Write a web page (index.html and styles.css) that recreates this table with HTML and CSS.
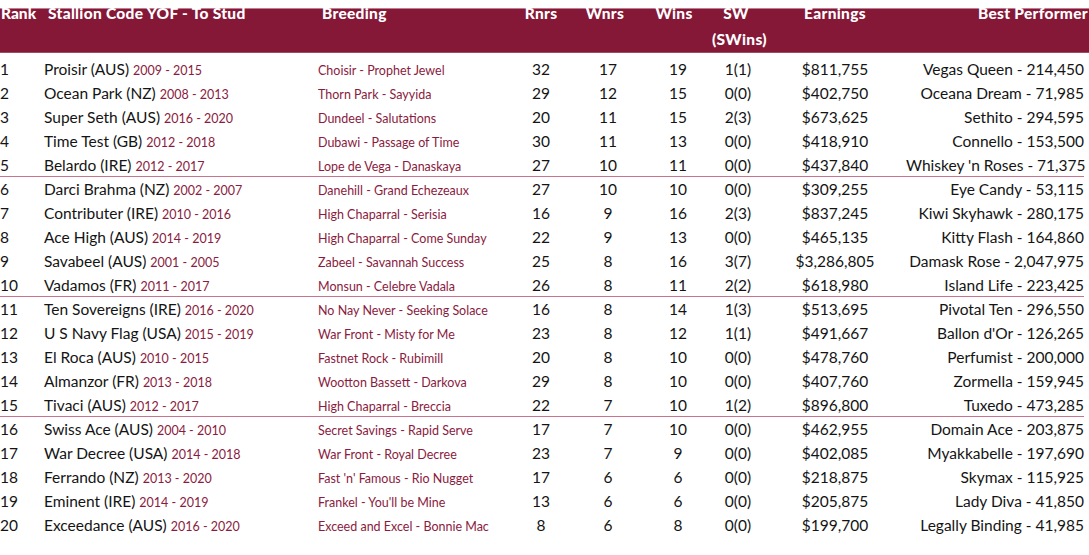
FILE: index.html
```html
<!DOCTYPE html>
<html lang="en">
<head>
<meta charset="utf-8">
<title>Stallion Rankings</title>
<link rel="stylesheet" href="styles.css">
</head>
<body>
<div class="page">
  <div class="head">
    <div class="head-inner grid">
      <div class="c-rank">Rank</div>
      <div class="c-stallion h-stallion">Stallion Code YOF - To Stud</div>
      <div class="c-breed h-breed">Breeding</div>
      <div class="c-num">Rnrs</div>
      <div class="c-num h-wnrs">Wnrs</div>
      <div class="c-num h-wins">Wins</div>
      <div class="c-num h-sw">SW<br>(SWins)</div>
      <div class="c-num">Earnings</div>
      <div class="c-best h-best">Best Performer</div>
    </div>
  </div>
  <div class="body">
    <div class="row grid"><div class="c-rank">1</div><div class="c-stallion">Proisir (AUS) <span class="yr">2009 - 2015</span></div><div class="c-breed">Choisir - Prophet Jewel</div><div class="c-num">32</div><div class="c-num">17</div><div class="c-num">19</div><div class="c-num">1(1)</div><div class="c-num">$811,755</div><div class="c-best">Vegas Queen - 214,450</div></div>
    <div class="row grid"><div class="c-rank">2</div><div class="c-stallion">Ocean Park (NZ) <span class="yr">2008 - 2013</span></div><div class="c-breed">Thorn Park - Sayyida</div><div class="c-num">29</div><div class="c-num">12</div><div class="c-num">15</div><div class="c-num">0(0)</div><div class="c-num">$402,750</div><div class="c-best">Oceana Dream - 71,985</div></div>
    <div class="row grid"><div class="c-rank">3</div><div class="c-stallion">Super Seth (AUS) <span class="yr">2016 - 2020</span></div><div class="c-breed">Dundeel - Salutations</div><div class="c-num">20</div><div class="c-num">11</div><div class="c-num">15</div><div class="c-num">2(3)</div><div class="c-num">$673,625</div><div class="c-best">Sethito - 294,595</div></div>
    <div class="row grid"><div class="c-rank">4</div><div class="c-stallion">Time Test (GB) <span class="yr">2012 - 2018</span></div><div class="c-breed">Dubawi - Passage of Time</div><div class="c-num">30</div><div class="c-num">11</div><div class="c-num">13</div><div class="c-num">0(0)</div><div class="c-num">$418,910</div><div class="c-best">Connello - 153,500</div></div>
    <div class="row grid sep"><div class="c-rank">5</div><div class="c-stallion">Belardo (IRE) <span class="yr">2012 - 2017</span></div><div class="c-breed">Lope de Vega - Danaskaya</div><div class="c-num">27</div><div class="c-num">10</div><div class="c-num">11</div><div class="c-num">0(0)</div><div class="c-num">$437,840</div><div class="c-best">Whiskey 'n Roses - 71,375</div></div>
    <div class="row grid"><div class="c-rank">6</div><div class="c-stallion">Darci Brahma (NZ) <span class="yr">2002 - 2007</span></div><div class="c-breed">Danehill - Grand Echezeaux</div><div class="c-num">27</div><div class="c-num">10</div><div class="c-num">10</div><div class="c-num">0(0)</div><div class="c-num">$309,255</div><div class="c-best">Eye Candy - 53,115</div></div>
    <div class="row grid"><div class="c-rank">7</div><div class="c-stallion">Contributer (IRE) <span class="yr">2010 - 2016</span></div><div class="c-breed">High Chaparral - Serisia</div><div class="c-num">16</div><div class="c-num">9</div><div class="c-num">16</div><div class="c-num">2(3)</div><div class="c-num">$837,245</div><div class="c-best">Kiwi Skyhawk - 280,175</div></div>
    <div class="row grid"><div class="c-rank">8</div><div class="c-stallion">Ace High (AUS) <span class="yr">2014 - 2019</span></div><div class="c-breed">High Chaparral - Come Sunday</div><div class="c-num">22</div><div class="c-num">9</div><div class="c-num">13</div><div class="c-num">0(0)</div><div class="c-num">$465,135</div><div class="c-best">Kitty Flash - 164,860</div></div>
    <div class="row grid"><div class="c-rank">9</div><div class="c-stallion">Savabeel (AUS) <span class="yr">2001 - 2005</span></div><div class="c-breed">Zabeel - Savannah Success</div><div class="c-num">25</div><div class="c-num">8</div><div class="c-num">16</div><div class="c-num">3(7)</div><div class="c-num">$3,286,805</div><div class="c-best">Damask Rose - 2,047,975</div></div>
    <div class="row grid sep"><div class="c-rank">10</div><div class="c-stallion">Vadamos (FR) <span class="yr">2011 - 2017</span></div><div class="c-breed">Monsun - Celebre Vadala</div><div class="c-num">26</div><div class="c-num">8</div><div class="c-num">11</div><div class="c-num">2(2)</div><div class="c-num">$618,980</div><div class="c-best">Island Life - 223,425</div></div>
    <div class="row grid"><div class="c-rank">11</div><div class="c-stallion">Ten Sovereigns (IRE) <span class="yr">2016 - 2020</span></div><div class="c-breed">No Nay Never - Seeking Solace</div><div class="c-num">16</div><div class="c-num">8</div><div class="c-num">14</div><div class="c-num">1(3)</div><div class="c-num">$513,695</div><div class="c-best">Pivotal Ten - 296,550</div></div>
    <div class="row grid"><div class="c-rank">12</div><div class="c-stallion">U S Navy Flag (USA) <span class="yr">2015 - 2019</span></div><div class="c-breed">War Front - Misty for Me</div><div class="c-num">23</div><div class="c-num">8</div><div class="c-num">12</div><div class="c-num">1(1)</div><div class="c-num">$491,667</div><div class="c-best">Ballon d'Or - 126,265</div></div>
    <div class="row grid"><div class="c-rank">13</div><div class="c-stallion">El Roca (AUS) <span class="yr">2010 - 2015</span></div><div class="c-breed">Fastnet Rock - Rubimill</div><div class="c-num">20</div><div class="c-num">8</div><div class="c-num">10</div><div class="c-num">0(0)</div><div class="c-num">$478,760</div><div class="c-best">Perfumist - 200,000</div></div>
    <div class="row grid"><div class="c-rank">14</div><div class="c-stallion">Almanzor (FR) <span class="yr">2013 - 2018</span></div><div class="c-breed">Wootton Bassett - Darkova</div><div class="c-num">29</div><div class="c-num">8</div><div class="c-num">10</div><div class="c-num">0(0)</div><div class="c-num">$407,760</div><div class="c-best">Zormella - 159,945</div></div>
    <div class="row grid sep"><div class="c-rank">15</div><div class="c-stallion">Tivaci (AUS) <span class="yr">2012 - 2017</span></div><div class="c-breed">High Chaparral - Breccia</div><div class="c-num">22</div><div class="c-num">7</div><div class="c-num">10</div><div class="c-num">1(2)</div><div class="c-num">$896,800</div><div class="c-best">Tuxedo - 473,285</div></div>
    <div class="row grid"><div class="c-rank">16</div><div class="c-stallion">Swiss Ace (AUS) <span class="yr">2004 - 2010</span></div><div class="c-breed">Secret Savings - Rapid Serve</div><div class="c-num">17</div><div class="c-num">7</div><div class="c-num">10</div><div class="c-num">0(0)</div><div class="c-num">$462,955</div><div class="c-best">Domain Ace - 203,875</div></div>
    <div class="row grid"><div class="c-rank">17</div><div class="c-stallion">War Decree (USA) <span class="yr">2014 - 2018</span></div><div class="c-breed">War Front - Royal Decree</div><div class="c-num">23</div><div class="c-num">7</div><div class="c-num">9</div><div class="c-num">0(0)</div><div class="c-num">$402,085</div><div class="c-best">Myakkabelle - 197,690</div></div>
    <div class="row grid"><div class="c-rank">18</div><div class="c-stallion">Ferrando (NZ) <span class="yr">2013 - 2020</span></div><div class="c-breed">Fast 'n' Famous - Rio Nugget</div><div class="c-num">17</div><div class="c-num">6</div><div class="c-num">6</div><div class="c-num">0(0)</div><div class="c-num">$218,875</div><div class="c-best">Skymax - 115,925</div></div>
    <div class="row grid"><div class="c-rank">19</div><div class="c-stallion">Eminent (IRE) <span class="yr">2014 - 2019</span></div><div class="c-breed">Frankel - You'll be Mine</div><div class="c-num">13</div><div class="c-num">6</div><div class="c-num">6</div><div class="c-num">0(0)</div><div class="c-num">$205,875</div><div class="c-best">Lady Diva - 41,850</div></div>
    <div class="row grid"><div class="c-rank">20</div><div class="c-stallion">Exceedance (AUS) <span class="yr">2016 - 2020</span></div><div class="c-breed">Exceed and Excel - Bonnie Mac</div><div class="c-num">8</div><div class="c-num">6</div><div class="c-num">8</div><div class="c-num">0(0)</div><div class="c-num">$199,700</div><div class="c-best">Legally Binding - 41,985</div></div>
  </div>
</div>
</body>
</html>
```
FILE: styles.css
```css
html, body {
  margin: 0;
  padding: 0;
  background: #ffffff;
}

.page {
  width: 1089px;
  padding-top: 8px;
  font-family: "Lato", "Liberation Sans", sans-serif;
  color: #141414;
}

.grid {
  display: grid;
  grid-template-columns: 44px 274px 192px 62px 72px 68px 52px 142px 178px;
  width: 1084px;
}

.head {
  background: #851737;
  height: 45px;
  border-top: 1px solid #c17d90;
  border-bottom: 1px solid #a04a64;
  box-sizing: border-box;
}

.head-inner {
  margin-top: -9px;
  color: #ffffff;
  font-weight: 900;
  font-size: 15.5px;
  letter-spacing: 0.3px;
  line-height: 26px;
}

.head-inner .c-rank {
  padding-left: 1px;
  letter-spacing: 0;
}

.h-stallion { padding-left: 4px; }
.h-breed { padding-left: 4px; }
.h-wnrs { padding-right: 6px; }
.h-wins { padding-right: 8px; }
.h-sw { padding-right: 4px; }
.h-best { margin-right: -4px; }

.body {
  padding-top: 4px;
}

.row {
  height: 24px;
  line-height: 24px;
  font-size: 15.5px;
  align-items: baseline;
  box-sizing: border-box;
}

.row.sep {
  border-bottom: 1px solid #c9748c;
}

.c-rank,
.c-stallion,
.c-breed {
  text-align: left;
  white-space: nowrap;
}

.c-num {
  text-align: center;
  white-space: nowrap;
}

.c-best {
  text-align: right;
  white-space: nowrap;
}

.yr,
.row .c-breed {
  color: #8a1b40;
  font-size: 12.5px;
}
```
